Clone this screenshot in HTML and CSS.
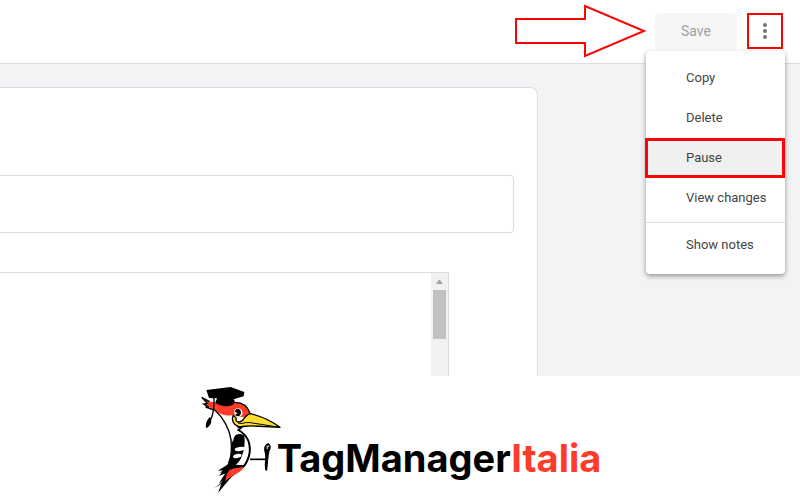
FILE: index.html
```
<!DOCTYPE html>
<html lang="en">
<head>
<meta charset="utf-8">
<meta name="viewport" content="width=device-width, initial-scale=1">
<title>Tag Manager Italia</title>
<link rel="stylesheet" href="styles.css">
</head>
<body>
<header class="toolbar">
  <svg class="arrow" width="132" height="56" viewBox="0 0 132 56" aria-hidden="true">
    <path d="M2 17H71V4L130 29L71 54V41H2Z" fill="none" stroke="#fa0505" stroke-width="2"/>
  </svg>
  <button class="save" type="button" disabled>Save</button>
  <div class="more-wrap">
    <button class="more" type="button" aria-label="More actions">
      <svg width="4" height="16" viewBox="0 0 4 16" aria-hidden="true"><circle cx="2" cy="2" r="2"/><circle cx="2" cy="8" r="2"/><circle cx="2" cy="14" r="2"/></svg>
    </button>
    <div class="menu">
      <button type="button">Copy</button>
      <button type="button">Delete</button>
      <button type="button" class="active">Pause</button>
      <button type="button">View changes</button>
      <hr>
      <button type="button">Show notes</button>
    </div>
  </div>
</header>
<main class="workspace">
  <section class="panel">
    <div class="field"></div>
    <div class="editor">
      <div class="track">
        <svg width="7" height="4" viewBox="0 0 7 4" aria-hidden="true"><path d="M0 4L3 0H4L7 4Z" fill="#a0a0a0"/></svg>
        <div class="thumb"></div>
      </div>
    </div>
  </section>
</main>
<footer class="brand">
  <svg class="bird" width="88" height="112" viewBox="0 0 264 336" aria-hidden="true">
    <path d="M14 40L38 53L75 57L112 55C135 54 152 68 159 88L140 100L108 94C85 96 64 90 52 77L20 61L31 59Z" fill="#ff3b2a"/>
    <path d="M38 53L14 40L31 58L20 60L36 70L26 69L54 79C78 100 98 135 102 168C104 190 104 215 96 238M112 55C136 54 152 67 159 88" fill="none" stroke="#000" stroke-width="4"/>
    <path d="M113 78C119 68 134 73 136 84C138 94 132 99 121 97C113 96 110 87 113 78Z" fill="#fff"/>
    <path d="M121 74C130 74 134 83 131 91C128 99 119 98 115 92L122 88L114 83C115 77 117 75 121 74Z" fill="#000"/>
    <path d="M109 94C103 106 108 122 123 127C137 130 150 124 170 126L249 130C225 112 195 97 160 89C149 92 142 101 137 109C129 117 113 115 118 103C115 99 112 97 109 94Z" fill="#ffe032" stroke="#000" stroke-width="4" stroke-linejoin="round"/>
    <path d="M123 117C137 122 143 113 160 116L249 130" fill="none" stroke="#000" stroke-width="3"/>
    <path d="M28 18L101 9L142 24L140 37L110 46C117 55 112 63 97 66C80 68 65 63 55 56L60 43L36 42Z" fill="#000"/>
    <path d="M46 34L51 44C52 65 49 88 42 105" fill="none" stroke="#000" stroke-width="4"/>
    <path d="M39 99C47 108 43 124 28 133C24 122 28 109 39 99Z" fill="#000"/>
    <path d="M120 127L132 131L124 138C147 151 161 175 158 205C155 226 147 240 137 251" fill="none" stroke="#000" stroke-width="6"/>
    <path d="M113 157C118 148 134 148 142 156C145 178 141 205 131 225C121 243 103 250 86 264L69 267C86 250 103 235 106 206C109 187 105 171 113 157Z" fill="#000"/>
    <path d="M103 163C107 192 102 220 92 237L107 236L112 187Z" fill="#000"/>
    <path d="M151 175C157 205 147 233 121 246C138 225 145 202 145 178Z" fill="#fff"/>
    <ellipse cx="128" cy="195" rx="15" ry="6" fill="#fff" transform="rotate(-8 128 195)"/>
    <ellipse cx="121" cy="216" rx="13" ry="6" fill="#fff" transform="rotate(-12 121 216)"/>
    <path d="M102 231L89 244L62 260L82 259L65 276L84 269L66 298L78 291L53 313L73 299L63 327L100 283L145 244L118 242Z" fill="#000"/>
    <path d="M98 258C113 249 127 253 141 248C132 267 110 269 84 292C87 280 90 265 98 258Z" fill="#ff3b2a"/>
    <path d="M159 226H209" fill="none" stroke="#000" stroke-width="5"/>
    <path d="M206 258C202 236 209 221 205 207C200 193 204 181 213 179C222 180 221 193 216 202C212 217 212 236 209 259Z" fill="#000" stroke="#000" stroke-width="3" stroke-linejoin="round"/>
    <path d="M210 185L211 195M216 184L213 189" fill="none" stroke="#fff" stroke-width="3"/>
  </svg>
  <div class="wordmark">TagManager<span>Italia</span></div>
</footer>
</body>
</html>
```
FILE: styles.css
```
* { box-sizing: border-box; }
body {
  margin: 0;
  min-height: 100vh;
  background: #fff;
  font-family: Roboto, "Liberation Sans", sans-serif;
}
button { font: inherit; border: 0; margin: 0; }
.toolbar {
  display: flex;
  align-items: flex-start;
  justify-content: flex-end;
  height: 64px;
  padding: 2px 17px 0 0;
  border-bottom: 1px solid #dadce0;
}
.arrow { margin-right: 9px; flex: none; }
.save {
  width: 82px;
  height: 36px;
  margin: 11px 10px 0 0;
  padding: 0;
  border-radius: 4px;
  background: #f6f6f6;
  color: #a0a0a0;
  font-size: 14px;
}
.more-wrap { position: relative; margin-top: 11px; }
.more {
  display: flex;
  align-items: center;
  justify-content: center;
  width: 36px;
  height: 36px;
  padding: 0;
  border: 2px solid #fa0505;
  background: #fff;
}
.more svg { fill: #757575; }
.menu {
  position: absolute;
  z-index: 1;
  top: 38px;
  right: -2px;
  width: 139px;
  padding: 7px 0 9px;
  border-radius: 4px;
  background: #fff;
  box-shadow: 0 2px 5px rgba(0, 0, 0, .4);
}
.menu button {
  display: block;
  width: 100%;
  height: 40px;
  padding: 0 0 2px 40px;
  background: #fff;
  color: #444;
  font-size: 13px;
  text-align: left;
  white-space: nowrap;
}
.menu .active {
  width: calc(100% + 1px);
  margin-left: -1px;
  padding-left: 38px;
  border: 3px solid #fa0505;
  background: #eff1f0;
}
.menu hr {
  height: 1px;
  margin: 4px 0 2px;
  border: 0;
  background: #dadce0;
}
.workspace {
  padding: 23px 262px 0 0;
  background: #f1f3f4;
}
.panel {
  padding: 87px 23px 0 0;
  border: solid #dadce0;
  border-width: 1px 1px 0 0;
  border-top-right-radius: 8px;
  background: #fff;
}
.field {
  height: 58px;
  border: solid #dadce0;
  border-width: 1px 1px 1px 0;
  border-radius: 0 4px 4px 0;
}
.editor {
  display: flex;
  justify-content: flex-end;
  height: 104px;
  margin: 39px 65px 0 0;
  border: solid #dadce0;
  border-width: 1px 1px 0 0;
}
.track {
  display: flex;
  flex-direction: column;
  align-items: center;
  gap: 6px;
  width: 17px;
  padding-top: 7px;
  background: #f1f1f1;
}
.thumb { width: 13px; height: 49px; background: #c1c1c1; }
.brand {
  display: flex;
  align-items: flex-start;
  justify-content: center;
  padding: 8px 2px 0 0;
}
.bird { flex: none; }
.wordmark {
  margin: 50px 0 0 -8px;
  color: #000;
  font-family: Inter, "Open Sans", sans-serif;
  font-size: 38px;
  font-weight: 700;
  line-height: 48px;
}
.wordmark span { color: #ff3b2a; }
```
